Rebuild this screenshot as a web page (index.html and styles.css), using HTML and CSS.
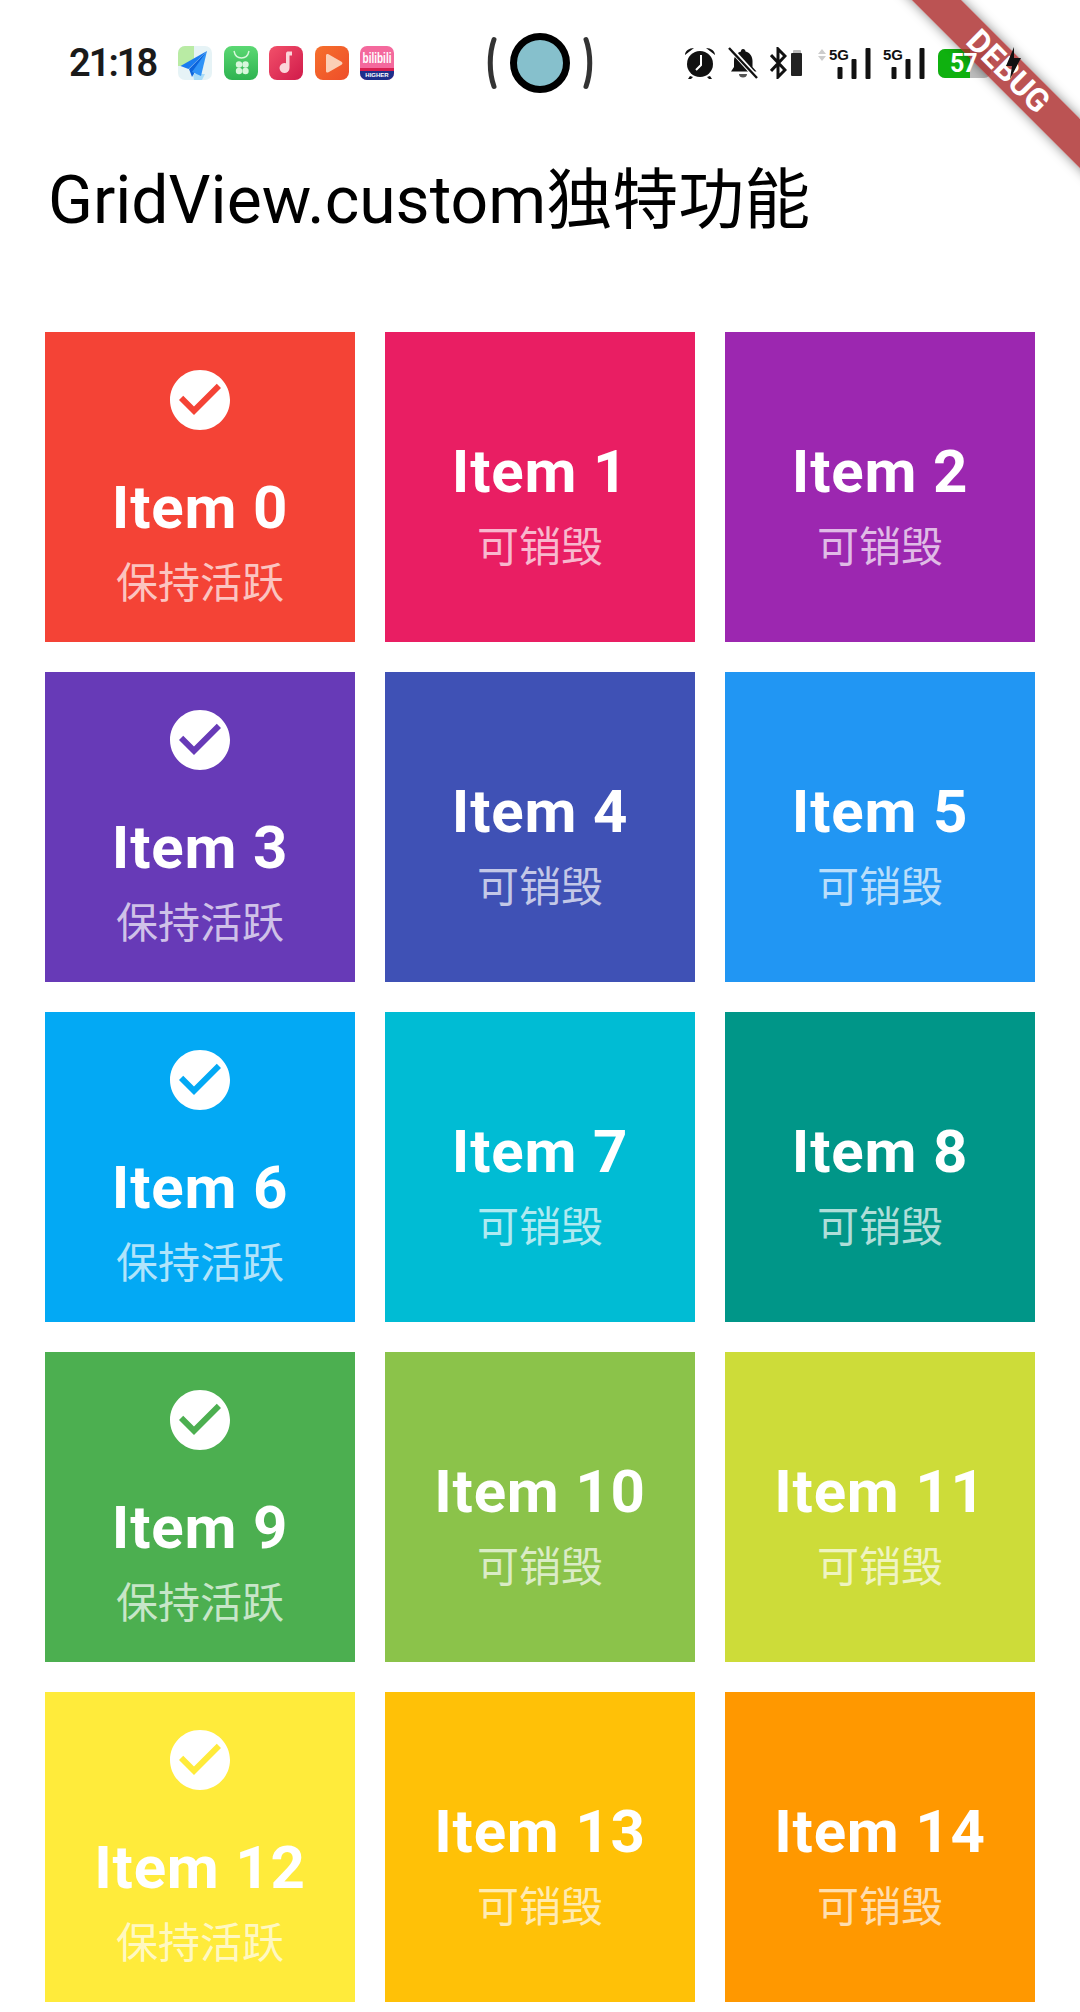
FILE: index.html
```html
<!DOCTYPE html>
<html lang="en">
<head>
    <meta charset="UTF-8">
    <meta name="viewport" content="width=device-width, initial-scale=1.0">
    <title>GridView.custom</title>
    <link rel="stylesheet" href="styles.css">
</head>
<body>
    <svg class="defs" width="0" height="0">
        <symbol id="check" viewBox="0 0 24 24">
            <path d="M12 2C6.48 2 2 6.48 2 12s4.48 10 10 10 10-4.48 10-10S17.52 2 12 2zm-2 15l-5-5 1.41-1.41L10 14.17l7.59-7.59L19 8l-9 9z"/>
        </symbol>
        <linearGradient id="greenApp" x1="0" y1="0" x2="0" y2="1">
            <stop offset="0" stop-color="#5bd873"/>
            <stop offset="1" stop-color="#2eb350"/>
        </linearGradient>
        <linearGradient id="redApp" x1="0" y1="0" x2="1" y2="1">
            <stop offset="0" stop-color="#f2506a"/>
            <stop offset="1" stop-color="#d01a4a"/>
        </linearGradient>
        <linearGradient id="orangeApp" x1="0" y1="0" x2="1" y2="1">
            <stop offset="0" stop-color="#f6702c"/>
            <stop offset="1" stop-color="#ee4d2a"/>
        </linearGradient>
    </svg>

    <div class="status-bar">
        <div class="status-left">
            <span class="time">21:18</span>
            <div class="apps">
                <svg class="app" viewBox="0 0 34 34">
                    <rect width="34" height="34" rx="7" fill="#e6f3f6"/>
                    <path d="M0 7a7 7 0 0 1 7-7h9v13L9 20H0z" fill="#b9eba4"/>
                    <path d="M15 28l12 0-3 6h-8z" fill="#a9dcf7"/>
                    <path d="M29 5L2.500 20l8 3z" fill="#1a7cf0"/>
                    <path d="M29 5L11 23l3 8z" fill="#0c64dc"/>
                    <path d="M29 5L14 26l9 4z" fill="#2f93f7"/>
                </svg>
                <svg class="app" viewBox="0 0 34 34">
                    <rect width="34" height="34" rx="8" fill="url(#greenApp)"/>
                    <path d="M10 5c1 5 4 7 7.500 7s6.500-2 7.500-7" fill="none" stroke="#d8f7dc" stroke-width="1.400"/>
                    <circle cx="15" cy="18.500" r="3.200" fill="#d8f7dc"/>
                    <circle cx="21.500" cy="18.500" r="3.200" fill="#d8f7dc"/>
                    <circle cx="15" cy="25" r="3.200" fill="#d8f7dc"/>
                    <circle cx="21.500" cy="25" r="3.200" fill="#d8f7dc"/>
                </svg>
                <svg class="app" viewBox="0 0 34 34">
                    <rect width="34" height="34" rx="8" fill="url(#redApp)"/>
                    <path d="M17 8c0-2 1-2.500 2.500-2.500H23v4h-2.500V22a5 5 0 1 1-3.500-4.700z" fill="#fbd5d9"/>
                </svg>
                <svg class="app" viewBox="0 0 34 34">
                    <rect width="34" height="34" rx="8" fill="url(#orangeApp)"/>
                    <path d="M11 9.500c0-1.500 1.200-2 2.500-1.300l13 7.500c1.300.8 1.300 2.300 0 3l-13 7.500c-1.300.7-2.500.2-2.500-1.300z" fill="#fbcfb6"/>
                </svg>
                <svg class="app" viewBox="0 0 34 34">
                    <rect width="34" height="34" rx="7" fill="#f4699d"/>
                    <path d="M0 22h34v5a7 7 0 0 1-7 7H7a7 7 0 0 1-7-7z" fill="#1d2f8c"/>
                    <path d="M0 22h34v3H0z" fill="#d81e50"/>
                    <text transform="translate(17 17) scale(1 1.400)" class="bili">bilibili</text>
                    <text x="17" y="30.500" class="bili-small">HIGHER</text>
                </svg>
            </div>
        </div>

        <svg class="camera" viewBox="0 0 122 62">
            <path d="M15 7.500c-5 14-5 33 0 47" class="bracket"/>
            <path d="M107 7.500c5 14 5 33 0 47" class="bracket"/>
            <circle cx="61" cy="31" r="26.500" fill="#86c0cc" stroke="#000" stroke-width="7"/>
        </svg>

        <div class="status-right">
            <svg class="st-alarm" viewBox="0 0 32 34">
                <circle cx="16" cy="18" r="13"/>
                <path d="M1 9c0-4 4-7 9-7zM31 9c0-4-4-7-9-7zM6 30l-2 3h3l2-2zM26 30l2 3h-3l-2-2z"/>
                <path d="M17 9v10l-5 5" fill="none" stroke="#fff" stroke-width="2"/>
            </svg>
            <svg class="st-bell" viewBox="0 0 30 32">
                <path d="M15 2c1.500 0 2.500 1 2.500 2.500 4.500 1 7 5 7 9.500v6l4 4.500H3l3-4.500v-6c0-4.500 3-8.500 7-9.500C13 3 13.500 2 15 2z"/>
                <path d="M11 27h8c0 2.500-1.800 3.500-4 3.500S11 29.500 11 27z" fill="#555"/>
                <path d="M1 0l29 32" stroke="#fff" stroke-width="5"/>
                <path d="M1 1l28 30" stroke="#111" stroke-width="2.400"/>
            </svg>
            <div class="st-bt">
                <svg class="st-blue" viewBox="0 0 17 32">
                    <path d="M1 8l14 15-7 7V2l7 7L1 24" fill="none" stroke="#111" stroke-width="3"/>
                </svg>
                <svg class="st-mini" viewBox="0 0 12 26">
                    <rect x="2" y="0" width="8" height="5" rx="1" fill="#bbb"/>
                    <rect y="3" width="11" height="23" rx="1" fill="#222"/>
                </svg>
            </div>
            <div class="st-net">
                <svg class="st-arrows" viewBox="0 0 8 12">
                    <path d="M4 0l4 5H0zM4 12l4-5H0z"/>
                </svg>
                <svg class="st-signal" viewBox="0 0 42 32">
                    <text x="0" y="13" class="five-g">5G</text>
                    <rect x="8.500" y="20" width="5" height="12" rx="1"/>
                    <rect x="22.500" y="12" width="5" height="20" rx="1"/>
                    <rect x="36.500" y="1" width="5" height="31" rx="1"/>
                </svg>
            </div>
            <svg class="st-signal st-second" viewBox="0 0 42 32">
                <text x="0" y="13" class="five-g">5G</text>
                <rect x="8.500" y="20" width="5" height="12" rx="1"/>
                <rect x="22.500" y="12" width="5" height="20" rx="1"/>
                <rect x="36.500" y="1" width="5" height="31" rx="1"/>
            </svg>
            <div class="battery">
                <div class="battery-fill"></div>
                <span class="battery-num">57</span>
            </div>
            <svg class="st-bolt" viewBox="0 0 18 32">
                <path d="M10 0L2 19h6l-2 13L17 11h-7z"/>
            </svg>
        </div>
    </div>

    <h1 class="page-title">GridView.custom独特功能</h1>

    <div class="grid">
        <div class="card keep c0">
            <svg class="check"><use href="#check"/></svg>
            <div class="item-title">Item 0</div>
            <div class="item-sub">保持活跃</div>
        </div>
        <div class="card c1">
            <div class="item-title">Item 1</div>
            <div class="item-sub">可销毁</div>
        </div>
        <div class="card c2">
            <div class="item-title">Item 2</div>
            <div class="item-sub">可销毁</div>
        </div>
        <div class="card keep c3">
            <svg class="check"><use href="#check"/></svg>
            <div class="item-title">Item 3</div>
            <div class="item-sub">保持活跃</div>
        </div>
        <div class="card c4">
            <div class="item-title">Item 4</div>
            <div class="item-sub">可销毁</div>
        </div>
        <div class="card c5">
            <div class="item-title">Item 5</div>
            <div class="item-sub">可销毁</div>
        </div>
        <div class="card keep c6">
            <svg class="check"><use href="#check"/></svg>
            <div class="item-title">Item 6</div>
            <div class="item-sub">保持活跃</div>
        </div>
        <div class="card c7">
            <div class="item-title">Item 7</div>
            <div class="item-sub">可销毁</div>
        </div>
        <div class="card c8">
            <div class="item-title">Item 8</div>
            <div class="item-sub">可销毁</div>
        </div>
        <div class="card keep c9">
            <svg class="check"><use href="#check"/></svg>
            <div class="item-title">Item 9</div>
            <div class="item-sub">保持活跃</div>
        </div>
        <div class="card c10">
            <div class="item-title">Item 10</div>
            <div class="item-sub">可销毁</div>
        </div>
        <div class="card c11">
            <div class="item-title">Item 11</div>
            <div class="item-sub">可销毁</div>
        </div>
        <div class="card keep c12">
            <svg class="check"><use href="#check"/></svg>
            <div class="item-title">Item 12</div>
            <div class="item-sub">保持活跃</div>
        </div>
        <div class="card c13">
            <div class="item-title">Item 13</div>
            <div class="item-sub">可销毁</div>
        </div>
        <div class="card c14">
            <div class="item-title">Item 14</div>
            <div class="item-sub">可销毁</div>
        </div>
    </div>

    <div class="debug-banner">DEBUG</div>
</body>
</html>
```

FILE: styles.css
```css
html, body {
    margin: 0;
    padding: 0;
    height: 2012px;
    overflow: hidden;
    background-color: #fff;
}

body {
    position: relative;
    font-family: Roboto, "Noto Sans CJK SC", sans-serif;
}

.defs {
    position: absolute;
}

/* status bar */
.status-bar {
    display: flex;
    align-items: center;
    height: 126px;
    padding-left: 69px;
}

.status-left {
    display: flex;
    align-items: center;
    width: 410px;
}

.time {
    width: 109px;
    font-family: Roboto, sans-serif;
    font-size: 38px;
    font-weight: 600;
    letter-spacing: -2px;
    color: #1a1a1a;
}

.apps {
    display: flex;
    gap: 11.5px;
}

.app {
    width: 34px;
    height: 34px;
}

.bili {
    font-family: "Liberation Sans", sans-serif;
    font-size: 10px;
    font-weight: bold;
    fill: #fff;
    text-anchor: middle;
}

.bili-small {
    font-family: "Liberation Sans", sans-serif;
    font-size: 6px;
    font-weight: bold;
    fill: #fff;
    text-anchor: middle;
}

.camera {
    width: 122px;
    height: 62px;
    margin-right: 83px;
}

.bracket {
    fill: none;
    stroke: #333;
    stroke-width: 5;
    stroke-linecap: round;
}

.status-right {
    display: flex;
    align-items: center;
    fill: #111;
}

.st-alarm {
    width: 32px;
    height: 34px;
    margin-right: 12px;
}

.st-bell {
    width: 30px;
    height: 32px;
    margin-right: 12px;
}

.st-bt {
    display: flex;
    align-items: center;
    gap: 4px;
    margin-right: 15px;
}

.st-blue {
    width: 17px;
    height: 32px;
}

.st-mini {
    width: 12px;
    height: 26px;
}

.st-net {
    display: flex;
    align-items: flex-start;
    gap: 3px;
}

.st-arrows {
    width: 8px;
    height: 12px;
    margin-top: 2px;
    fill: #ccc;
}

.st-signal {
    width: 42px;
    height: 32px;
    overflow: visible;
}

.st-second {
    margin-left: 12px;
    margin-right: 13px;
}

.five-g {
    font-family: "Liberation Sans", sans-serif;
    font-size: 15px;
    font-weight: bold;
}

.battery {
    position: relative;
    width: 53px;
    height: 29px;
    margin-right: 13px;
    border-radius: 7px;
    background-color: #bdbdbd;
    overflow: hidden;
}

.battery-fill {
    width: 32px;
    height: 100%;
    background-color: #0fb10f;
}

.battery-num {
    position: absolute;
    z-index: 2;
    top: 0;
    left: 12px;
    font-size: 25px;
    line-height: 29px;
    font-weight: bold;
    letter-spacing: -1px;
    color: #fff;
}

.st-bolt {
    position: relative;
    z-index: 2;
    width: 18px;
    height: 32px;
}

/* page title */
.page-title {
    margin: 0;
    height: 150px;
    padding-left: 48px;
    box-sizing: border-box;
    font-size: 66px;
    font-weight: 400;
    line-height: 150px;
    white-space: nowrap;
    color: #000;
}

/* grid */
.grid {
    display: grid;
    grid-template-columns: repeat(3, 310px);
    grid-auto-rows: 310px;
    gap: 30px;
    padding: 56px 45px 0;
}

.card {
    display: flex;
    flex-direction: column;
    align-items: center;
    box-sizing: border-box;
    padding-top: 108px;
    color: #fff;
}

.card.keep {
    padding-top: 32px;
}

.check {
    width: 72px;
    height: 72px;
    margin-bottom: 40px;
    fill: #fff;
}

.item-title {
    height: 64px;
    font-size: 60px;
    font-weight: 700;
    line-height: 64px;
    letter-spacing: 0.8px;
}

.item-sub {
    margin-top: 12px;
    font-size: 42px;
    line-height: 64px;
    color: rgba(255, 255, 255, 0.7);
}

.c0 { background-color: #f44336; }
.c1 { background-color: #e91e63; }
.c2 { background-color: #9c27b0; }
.c3 { background-color: #673ab7; }
.c4 { background-color: #3f51b5; }
.c5 { background-color: #2196f3; }
.c6 { background-color: #03a9f4; }
.c7 { background-color: #00bcd4; }
.c8 { background-color: #009688; }
.c9 { background-color: #4caf50; }
.c10 { background-color: #8bc34a; }
.c11 { background-color: #cddc39; }
.c12 { background-color: #ffeb3b; }
.c13 { background-color: #ffc107; }
.c14 { background-color: #ff9800; }

/* flutter debug ribbon */
.debug-banner {
    position: absolute;
    top: 54px;
    left: 858px;
    width: 300px;
    height: 35px;
    transform: rotate(45deg);
    background-color: rgba(170, 40, 40, 0.8);
    box-shadow: 0 0 12px rgba(0, 0, 0, 0.45);
    font-size: 32px;
    font-weight: 700;
    line-height: 35px;
    text-align: center;
    color: #fff;
}
```
